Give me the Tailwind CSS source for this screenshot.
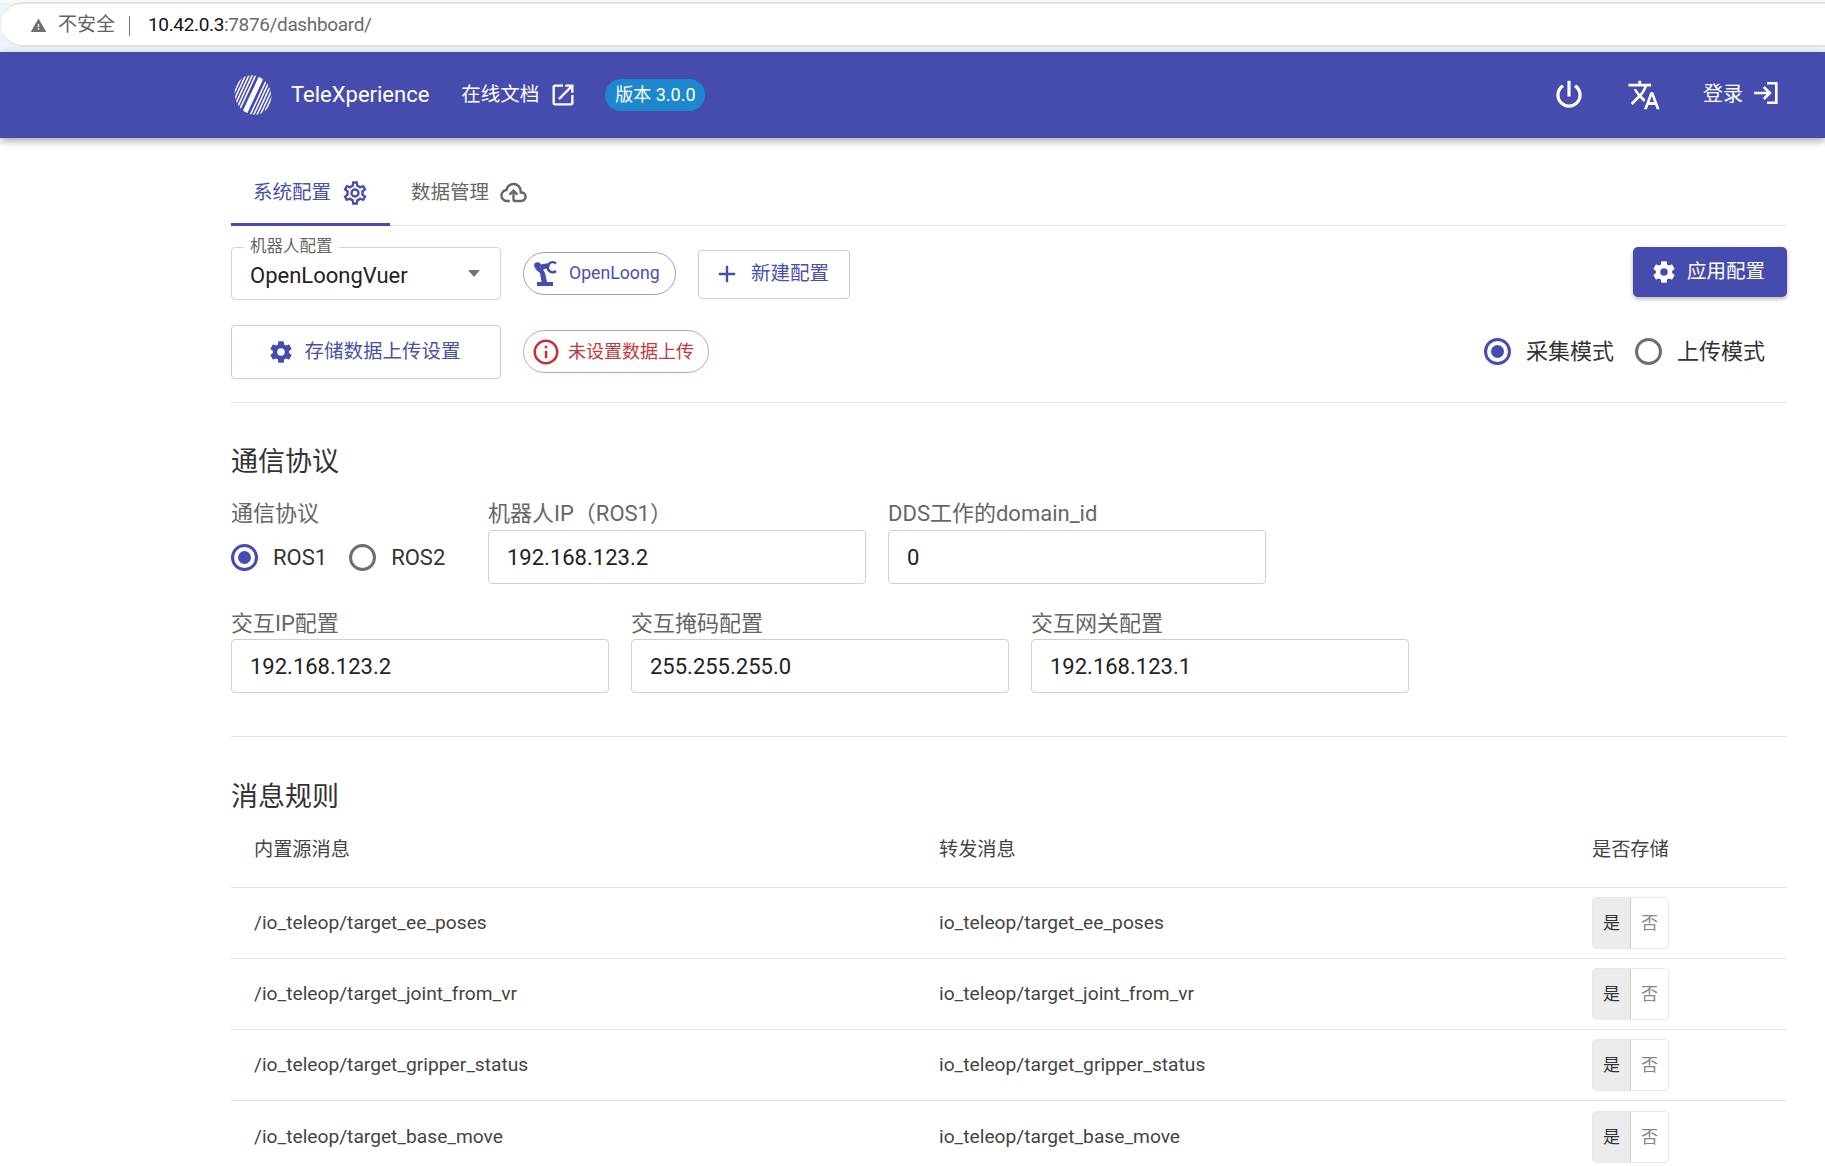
<!DOCTYPE html>
<html lang="zh">
<head>
<meta charset="utf-8">
<title>TeleXperience</title>
<script src="https://cdn.jsdelivr.net/npm/@tailwindcss/browser@4"></script>
</head>
<body class="bg-white">
<div class="w-[1825px] h-[1166px] overflow-hidden flex flex-col bg-white text-[#333] font-['Roboto','Noto_Sans_CJK_SC',sans-serif]">

  <!-- browser address bar -->
  <div class="h-[52px] shrink-0 bg-[#eef3fa] pb-[5px]">
    <div class="h-[3px] bg-[#f8f8f8] -mb-[1px]"></div>
    <div class="h-[45px] bg-white border-y-2 border-[#e2e2e2] flex items-center rounded-l-[22px] ml-[1px] pl-[29px] pt-[2px]">
      <svg class="w-[17px] h-[17px] fill-[#6f6f6f]" viewBox="0 0 24 24"><path d="M1 21h22L12 2 1 21z"/><path fill="#fff" d="M13 18h-2v-2h2zm0-4h-2v-4h2z"/></svg>
      <span class="ml-[11px] text-[19px] text-[#5f6368]">不安全</span>
      <span class="ml-[14px] w-px h-[20px] bg-[#777]"></span>
      <span class="ml-[18px] text-[19px] tracking-[-0.35px] text-[#111]">10.42.0.3<span class="text-[#6b6b6b]">:7876/dashboard/</span></span>
    </div>
  </div>

  <!-- app header -->
  <header class="h-[86px] shrink-0 bg-[#454cad] shadow-[0_3px_8px_rgba(0,0,0,0.35)] flex items-center pl-[233px] pr-[46px] text-white relative z-10">
    <svg class="w-[40px] h-[40px] shrink-0" viewBox="0 0 40 40" fill="none" stroke="#fff">
      <defs><clipPath id="logoclip"><ellipse cx="20" cy="20" rx="18" ry="20" transform="rotate(-25 20 20)"/></clipPath></defs>
      <g clip-path="url(#logoclip)">
        <g transform="rotate(25 20 20)" stroke-width="1.5">
          <path d="M2 -5V45"/><path d="M5 -5V45"/><path d="M8 -5V45"/><path d="M11 -5V45"/><path d="M14 -5V45"/>
          <path d="M26 -5V45"/><path d="M29 -5V45"/><path d="M32 -5V45"/><path d="M35 -5V45"/><path d="M38 -5V45"/>
          <path d="M20 -5V45" stroke-width="5"/>
        </g>
      </g>
    </svg>
    <span class="ml-[18px] text-[22px] leading-none">TeleXperience</span>
    <span class="ml-[32px] text-[19.5px] leading-none">在线文档</span>
    <svg class="ml-[10px] w-[28px] h-[28px] fill-white" viewBox="0 0 24 24"><path d="M14,3V5H17.59L7.76,14.83L9.17,16.24L19,6.41V10H21V3M19,19H5V5H12V3H5C3.89,3 3,3.9 3,5V19A2,2 0 0,0 5,21H19A2,2 0 0,0 21,19V12H19V19Z"/></svg>
    <span class="ml-[28px] h-[32px] w-[100px] rounded-full bg-[#1e88cf] flex items-center justify-center text-[18px] pb-[1px]">版本 3.0.0</span>
    <svg class="ml-auto w-[38px] h-[38px] fill-white" viewBox="0 0 24 24"><path d="M16.56,5.44L15.11,6.89C16.84,7.94 18,9.83 18,12A6,6 0 0,1 12,18A6,6 0 0,1 6,12C6,9.83 7.16,7.94 8.88,6.88L7.44,5.44C5.36,6.88 4,9.28 4,12A8,8 0 0,0 12,20A8,8 0 0,0 20,12C20,9.28 18.64,6.88 16.56,5.44M13,3H11V13H13V3Z"/></svg>
    <svg class="ml-[39px] w-[34px] h-[34px] fill-white" viewBox="0 0 24 24"><path d="M12.87,15.07L10.33,12.56L10.36,12.53C12.1,10.59 13.34,8.36 14.07,6H17V4H10V2H8V4H1V6H12.17C11.5,7.92 10.44,9.75 9,11.35C8.07,10.32 7.3,9.19 6.69,8H4.69C5.42,9.63 6.42,11.17 7.67,12.56L2.58,17.58L4,19L9,14L12.11,17.11L12.87,15.07M18.5,10H16.5L12,22H14L15.12,19H19.87L21,22H23L18.5,10M15.88,17L17.5,12.67L19.12,17H15.88Z"/></svg>
    <span class="ml-[42px] text-[20px] leading-none -mt-[3px]">登录</span>
    <svg class="ml-[10px] -mt-[4px] w-[26px] h-[26px]" viewBox="0 0 24 24" fill="none" stroke="#fff" stroke-width="2.4"><path d="M1 12H15M10 6.5L15.5 12L10 17.5"/><path d="M13 3H21.5V21H13"/></svg>
  </header>

  <main class="flex-1 pl-[231px] pr-[38px] pt-[28px] flex flex-col overflow-hidden">

    <!-- tabs -->
    <div class="h-[60px] shrink-0 flex border-b border-[#e4e4e4]">
      <div class="w-[159px] h-[60px] border-b-[3px] border-[#454cad] flex items-center pl-[22px] pb-[4px] text-[#4a51a8]">
        <span class="text-[19.5px]">系统配置</span>
        <svg class="ml-[10px] w-[28px] h-[28px] fill-[#454cad]" viewBox="0 0 24 24"><path d="M12,8A4,4 0 0,1 16,12A4,4 0 0,1 12,16A4,4 0 0,1 8,12A4,4 0 0,1 12,8M12,10A2,2 0 0,0 10,12A2,2 0 0,0 12,14A2,2 0 0,0 14,12A2,2 0 0,0 12,10M10,22C9.75,22 9.54,21.82 9.5,21.58L9.13,18.93C8.5,18.68 7.96,18.34 7.44,17.94L4.95,18.95C4.73,19.03 4.46,18.95 4.34,18.73L2.34,15.27C2.21,15.05 2.27,14.78 2.46,14.63L4.57,12.97L4.5,12L4.57,11L2.46,9.37C2.27,9.22 2.21,8.95 2.34,8.73L4.34,5.27C4.46,5.05 4.73,4.96 4.95,5.05L7.44,6.05C7.96,5.66 8.5,5.32 9.13,5.07L9.5,2.42C9.54,2.18 9.75,2 10,2H14C14.25,2 14.46,2.18 14.5,2.42L14.87,5.07C15.5,5.32 16.04,5.66 16.56,6.05L19.05,5.05C19.27,4.96 19.54,5.05 19.66,5.27L21.66,8.73C21.79,8.95 21.73,9.22 21.54,9.37L19.43,11L19.5,12L19.43,13L21.54,14.63C21.73,14.78 21.79,15.05 21.66,15.27L19.66,18.73C19.54,18.95 19.27,19.04 19.05,18.95L16.56,17.95C16.04,18.34 15.5,18.68 14.87,18.93L14.5,21.58C14.46,21.82 14.25,22 14,22H10M11.25,4L10.88,6.61C9.68,6.86 8.62,7.5 7.85,8.39L5.44,7.35L4.69,8.65L6.8,10.2C6.4,11.37 6.4,12.64 6.8,13.8L4.68,15.36L5.43,16.66L7.86,15.62C8.63,16.5 9.68,17.14 10.87,17.38L11.24,20H12.76L13.13,17.39C14.32,17.14 15.37,16.5 16.14,15.62L18.57,16.66L19.32,15.36L17.2,13.81C17.6,12.64 17.6,11.37 17.2,10.2L19.31,8.65L18.56,7.35L16.15,8.39C15.38,7.5 14.32,6.86 13.12,6.62L12.75,4H11.25Z"/></svg>
      </div>
      <div class="flex items-center pl-[21px] pb-[6px] text-[#666]">
        <span class="text-[19.5px]">数据管理</span>
        <svg class="ml-[10px] w-[29px] h-[29px] fill-[#666]" viewBox="0 0 24 24"><path d="M6.5 20Q4.22 20 2.61 18.43 1 16.85 1 14.58 1 12.63 2.17 11.1 3.35 9.57 5.25 9.15 5.88 6.85 7.75 5.43 9.63 4 12 4 14.93 4 16.96 6.04 19 8.07 19 11 20.73 11.2 21.86 12.5 23 13.78 23 15.5 23 17.38 21.69 18.69 20.38 20 18.5 20H13Q12.18 20 11.59 19.41 11 18.83 11 18V12.85L9.4 14.4L8 13L12 9L16 13L14.6 14.4L13 12.85V18H18.5Q19.55 18 20.27 17.27 21 16.55 21 15.5 21 14.45 20.27 13.73 19.55 13 18.5 13H17V11Q17 8.93 15.54 7.46 14.08 6 12 6 9.93 6 8.46 7.46 7 8.93 7 11H6.5Q5.05 11 4.03 12.03 3 13.05 3 14.5 3 15.95 4.03 17 5.05 18 6.5 18H9V20M12 13Z"/></svg>
      </div>
    </div>

    <!-- row 1 -->
    <div class="mt-[21px] h-[53px] shrink-0 flex items-center">
      <div class="relative w-[270px] h-[53px] border border-[#d4d4d4] rounded-[4px] flex items-center pl-[18px] pr-[20px]">
        <span class="absolute -top-[10px] left-[12px] bg-white px-[6px] text-[16.5px] leading-[18px] text-[#666]">机器人配置</span>
        <span class="text-[22px] text-[#222] mt-[3px]">OpenLoongVuer</span>
        <span class="ml-auto w-0 h-0 border-x-[6px] border-x-transparent border-t-[7px] border-t-[#757575]"></span>
      </div>
      <div class="ml-[22px] w-[153px] h-[43px] rounded-full border border-[#9a9dc8] flex items-center pl-[9px] text-[#4a51a8]">
        <svg class="w-[28px] h-[28px]" viewBox="0 0 28 28" fill="#454cad"><path d="M2 9L8.5 7L12 13L14 22H20V26H4V22H8.5L7 13Z"/><circle cx="4.5" cy="5.5" r="3.3"/><path d="M7 4.5L16.5 3V7.5L9 10Z"/><path d="M23 3.5A5 5 0 1 0 23 11" fill="none" stroke="#454cad" stroke-width="2.6"/></svg>
        <span class="ml-[8px] text-[17.7px]">OpenLoong</span>
      </div>
      <div class="ml-[22px] w-[152px] h-[49px] mt-[1px] rounded-[4px] border border-[#c9cade] flex items-center pl-[14px] text-[#4a51a8]">
        <svg class="w-[28px] h-[28px] fill-[#454cad]" viewBox="0 0 24 24"><path d="M19,13H13V19H11V13H5V11H11V5H13V11H19V13Z"/></svg>
        <span class="ml-[10px] text-[19.5px]">新建配置</span>
      </div>
      <div class="ml-auto w-[154px] h-[50px] -mt-[3px] rounded-[5px] bg-[#454cad] shadow-[0_2px_4px_rgba(0,0,0,0.3)] flex items-center pl-[18px] text-white">
        <svg class="w-[26px] h-[26px] fill-white" viewBox="0 0 24 24"><path d="M12,15.5A3.5,3.5 0 0,1 8.5,12A3.5,3.5 0 0,1 12,8.5A3.5,3.5 0 0,1 15.5,12A3.5,3.5 0 0,1 12,15.5M19.43,12.97C19.47,12.65 19.5,12.33 19.5,12C19.5,11.67 19.47,11.34 19.43,11L21.54,9.37C21.73,9.22 21.78,8.95 21.66,8.73L19.66,5.27C19.54,5.05 19.27,4.96 19.05,5.05L16.56,6.05C16.04,5.66 15.5,5.32 14.87,5.07L14.5,2.42C14.46,2.18 14.25,2 14,2H10C9.75,2 9.54,2.18 9.5,2.42L9.13,5.07C8.5,5.32 7.96,5.66 7.44,6.05L4.95,5.05C4.73,4.96 4.46,5.05 4.34,5.27L2.34,8.73C2.21,8.95 2.27,9.22 2.46,9.37L4.57,11C4.53,11.34 4.5,11.67 4.5,12C4.5,12.33 4.53,12.65 4.57,12.97L2.46,14.63C2.27,14.78 2.21,15.05 2.34,15.27L4.34,18.73C4.46,18.95 4.73,19.03 4.95,18.95L7.44,17.94C7.96,18.34 8.5,18.68 9.13,18.93L9.5,21.58C9.54,21.82 9.75,22 10,22H14C14.25,22 14.46,21.82 14.5,21.58L14.87,18.93C15.5,18.67 16.04,18.34 16.56,17.94L19.05,18.95C19.27,19.03 19.54,18.95 19.66,18.73L21.66,15.27C21.78,15.05 21.73,14.78 21.54,14.63L19.43,12.97Z"/></svg>
        <span class="ml-[10px] text-[19.5px]">应用配置</span>
      </div>
    </div>

    <!-- row 2 -->
    <div class="mt-[25px] h-[54px] shrink-0 flex items-center">
      <div class="w-[270px] h-[54px] rounded-[4px] border-[1.5px] border-[#c5c7e6] flex items-center justify-center pr-[3px] text-[#4a51a8]">
        <svg class="w-[26px] h-[26px] fill-[#454cad]" viewBox="0 0 24 24"><path d="M12,15.5A3.5,3.5 0 0,1 8.5,12A3.5,3.5 0 0,1 12,8.5A3.5,3.5 0 0,1 15.5,12A3.5,3.5 0 0,1 12,15.5M19.43,12.97C19.47,12.65 19.5,12.33 19.5,12C19.5,11.67 19.47,11.34 19.43,11L21.54,9.37C21.73,9.22 21.78,8.95 21.66,8.73L19.66,5.27C19.54,5.05 19.27,4.96 19.05,5.05L16.56,6.05C16.04,5.66 15.5,5.32 14.87,5.07L14.5,2.42C14.46,2.18 14.25,2 14,2H10C9.75,2 9.54,2.18 9.5,2.42L9.13,5.07C8.5,5.32 7.96,5.66 7.44,6.05L4.95,5.05C4.73,4.96 4.46,5.05 4.34,5.27L2.34,8.73C2.21,8.95 2.27,9.22 2.46,9.37L4.57,11C4.53,11.34 4.5,11.67 4.5,12C4.5,12.33 4.53,12.65 4.57,12.97L2.46,14.63C2.27,14.78 2.21,15.05 2.34,15.27L4.34,18.73C4.46,18.95 4.73,19.03 4.95,18.95L7.44,17.94C7.96,18.34 8.5,18.68 9.13,18.93L9.5,21.58C9.54,21.82 9.75,22 10,22H14C14.25,22 14.46,21.82 14.5,21.58L14.87,18.93C15.5,18.67 16.04,18.34 16.56,17.94L19.05,18.95C19.27,19.03 19.54,18.95 19.66,18.73L21.66,15.27C21.78,15.05 21.73,14.78 21.54,14.63L19.43,12.97Z"/></svg>
        <span class="ml-[10px] text-[19.5px]">存储数据上传设置</span>
      </div>
      <div class="ml-[22px] w-[186px] h-[43px] -mt-[1px] rounded-full border border-[#dd9a9e] flex items-center pl-[7px] text-[#c03a3e]">
        <svg class="w-[30px] h-[30px] fill-[#c62f33]" viewBox="0 0 24 24"><path d="M11,9H13V7H11M12,20C7.59,20 4,16.41 4,12C4,7.59 7.59,4 12,4C16.41,4 20,7.59 20,12C20,16.41 16.41,20 12,20M12,2A10,10 0 0,0 2,12A10,10 0 0,0 12,22A10,10 0 0,0 22,12A10,10 0 0,0 12,2M11,17H13V11H11V17Z"/></svg>
        <span class="ml-[7px] text-[18px]">未设置数据上传</span>
      </div>
      <div class="ml-auto flex items-center pr-[22px] -mt-[2px] text-[22px] text-[#333]">
        <span class="w-[27px] h-[27px] rounded-full border-[3px] border-[#454cad] flex items-center justify-center"><span class="w-[13px] h-[13px] rounded-full bg-[#454cad]"></span></span>
        <span class="ml-[15px]">采集模式</span>
        <span class="ml-[21px] w-[27px] h-[27px] rounded-full border-[3px] border-[#6e6e6e]"></span>
        <span class="ml-[15px]">上传模式</span>
      </div>
    </div>

    <div class="mt-[23px] h-px shrink-0 bg-[#e2e2e2]"></div>

    <!-- protocol section -->
    <h2 class="mt-[39px] h-[40px] shrink-0 flex items-center text-[27px] font-normal text-[#333]">通信协议</h2>

    <div class="mt-[19px] shrink-0 flex items-start">
      <div class="w-[257px]">
        <div class="h-[25px] flex items-center text-[22px] text-[#666]">通信协议</div>
        <div class="mt-[4px] h-[54px] flex items-center text-[22px] text-[#333]">
          <span class="w-[27px] h-[27px] rounded-full border-[3px] border-[#454cad] flex items-center justify-center"><span class="w-[13px] h-[13px] rounded-full bg-[#454cad]"></span></span>
          <span class="ml-[15px]">ROS1</span>
          <span class="ml-[22px] w-[27px] h-[27px] rounded-full border-[3px] border-[#6e6e6e]"></span>
          <span class="ml-[15px]">ROS2</span>
        </div>
      </div>
      <div class="w-[378px]">
        <div class="h-[25px] flex items-center text-[22px] text-[#666]">机器人IP（ROS1）</div>
        <div class="mt-[4px] h-[54px] border border-[#d0d0d0] rounded-[4px] flex items-center pl-[18px] text-[22px] text-[#222]">192.168.123.2</div>
      </div>
      <div class="ml-[22px] w-[378px]">
        <div class="h-[25px] flex items-center text-[22px] text-[#666]">DDS工作的domain_id</div>
        <div class="mt-[4px] h-[54px] border border-[#d0d0d0] rounded-[4px] flex items-center pl-[18px] text-[22px] text-[#222]">0</div>
      </div>
    </div>

    <div class="mt-[27px] shrink-0 flex gap-[22px]">
      <div class="w-[378px]">
        <div class="h-[25px] flex items-center text-[22px] text-[#666]">交互IP配置</div>
        <div class="mt-[3px] h-[54px] border border-[#d0d0d0] rounded-[4px] flex items-center pl-[18px] text-[22px] text-[#222]">192.168.123.2</div>
      </div>
      <div class="w-[378px]">
        <div class="h-[25px] flex items-center text-[22px] text-[#666]">交互掩码配置</div>
        <div class="mt-[3px] h-[54px] border border-[#d0d0d0] rounded-[4px] flex items-center pl-[18px] text-[22px] text-[#222]">255.255.255.0</div>
      </div>
      <div class="w-[378px]">
        <div class="h-[25px] flex items-center text-[22px] text-[#666]">交互网关配置</div>
        <div class="mt-[3px] h-[54px] border border-[#d0d0d0] rounded-[4px] flex items-center pl-[18px] text-[22px] text-[#222]">192.168.123.1</div>
      </div>
    </div>

    <div class="mt-[43px] h-px shrink-0 bg-[#e2e2e2]"></div>

    <!-- rules section -->
    <h2 class="mt-[40px] h-[40px] shrink-0 flex items-center text-[27px] font-normal text-[#333]">消息规则</h2>

    <div class="mt-[6px] h-[52px] shrink-0 flex items-center pl-[23px] pt-[1px] pb-[11px] box-content text-[19.2px] text-[#444] border-b border-[#e2e2e2]">
      <span class="w-[685px]">内置源消息</span>
      <span class="w-[653px]">转发消息</span>
      <span>是否存储</span>
    </div>

    <div class="h-[71px] shrink-0 flex items-center pl-[23px] text-[19.2px] text-[#444] border-b border-[#e2e2e2]">
      <span class="w-[685px] mt-[1px]">/io_teleop/target_ee_poses</span>
      <span class="w-[653px] mt-[1px]">io_teleop/target_ee_poses</span>
      <div class="flex w-[77px] h-[52px] rounded-[4px] border border-[#e8e8e8] text-[17px]"><span class="w-[38px] bg-[#ececec] border-r border-[#cfcfcf] rounded-l-[4px] flex items-center justify-center pt-[2px] text-[#333]">是</span><span class="flex-1 flex items-center justify-center pt-[2px] text-[#888]">否</span></div>
    </div>
    <div class="h-[71px] shrink-0 flex items-center pl-[23px] text-[19.2px] text-[#444] border-b border-[#e2e2e2]">
      <span class="w-[685px] mt-[1px]">/io_teleop/target_joint_from_vr</span>
      <span class="w-[653px] mt-[1px]">io_teleop/target_joint_from_vr</span>
      <div class="flex w-[77px] h-[52px] rounded-[4px] border border-[#e8e8e8] text-[17px]"><span class="w-[38px] bg-[#ececec] border-r border-[#cfcfcf] rounded-l-[4px] flex items-center justify-center pt-[2px] text-[#333]">是</span><span class="flex-1 flex items-center justify-center pt-[2px] text-[#888]">否</span></div>
    </div>
    <div class="h-[71px] shrink-0 flex items-center pl-[23px] text-[19.2px] text-[#444] border-b border-[#e2e2e2]">
      <span class="w-[685px] mt-[1px]">/io_teleop/target_gripper_status</span>
      <span class="w-[653px] mt-[1px]">io_teleop/target_gripper_status</span>
      <div class="flex w-[77px] h-[52px] rounded-[4px] border border-[#e8e8e8] text-[17px]"><span class="w-[38px] bg-[#ececec] border-r border-[#cfcfcf] rounded-l-[4px] flex items-center justify-center pt-[2px] text-[#333]">是</span><span class="flex-1 flex items-center justify-center pt-[2px] text-[#888]">否</span></div>
    </div>
    <div class="h-[71px] shrink-0 flex items-center pl-[23px] text-[19.2px] text-[#444]">
      <span class="w-[685px] mt-[1px]">/io_teleop/target_base_move</span>
      <span class="w-[653px] mt-[1px]">io_teleop/target_base_move</span>
      <div class="flex w-[77px] h-[52px] rounded-[4px] border border-[#e8e8e8] text-[17px]"><span class="w-[38px] bg-[#ececec] border-r border-[#cfcfcf] rounded-l-[4px] flex items-center justify-center pt-[2px] text-[#333]">是</span><span class="flex-1 flex items-center justify-center pt-[2px] text-[#888]">否</span></div>
    </div>
  </main>
</div>
</body>
</html>
